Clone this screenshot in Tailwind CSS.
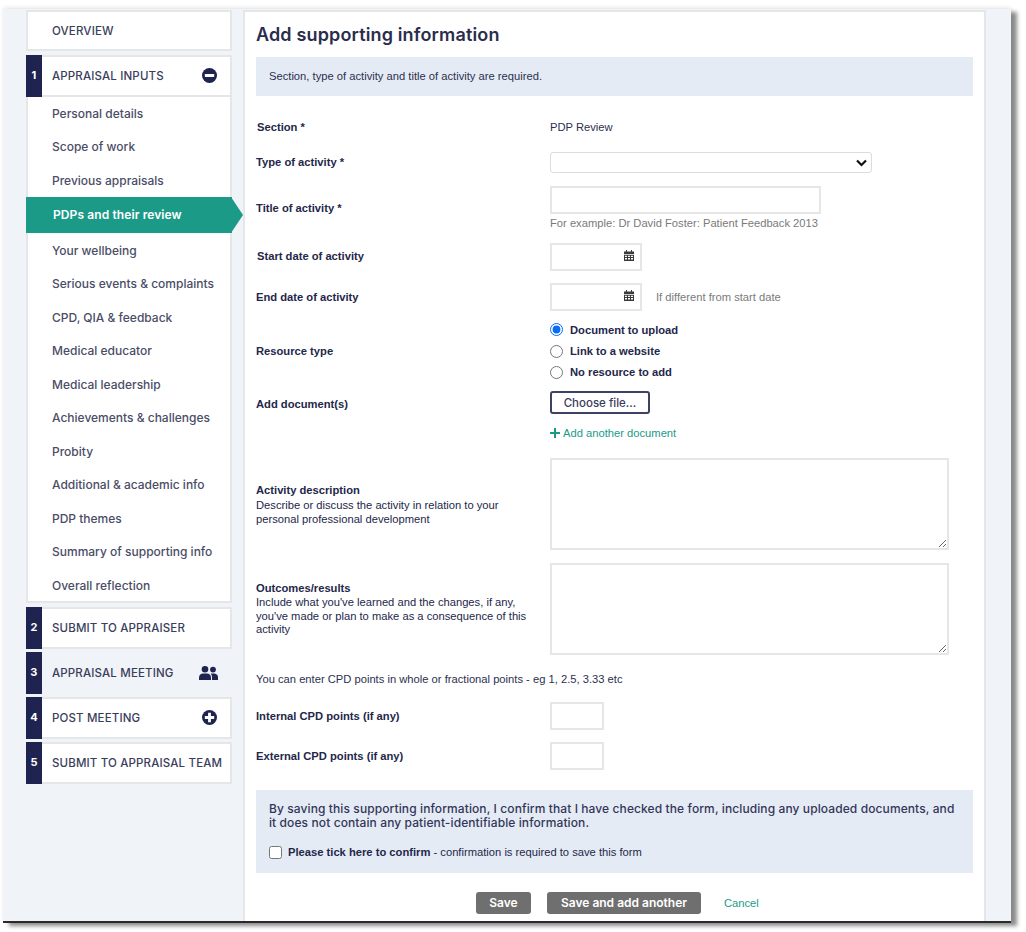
<!DOCTYPE html>
<html lang="en">
<head>
<meta charset="utf-8">
<title>Add supporting information</title>
<script src="https://cdn.jsdelivr.net/npm/@tailwindcss/browser@4"></script>
</head>
<body class="bg-white w-[1026px] h-[932px] overflow-hidden font-['Liberation_Sans',sans-serif] text-[#1f2450]">
<div class="ml-[3px] mt-[9px] w-[1008px] h-[914px] flex items-stretch bg-[#f0f4f8] border-b-2 border-[#2a2a2a] shadow-[6px_3px_4px_rgba(0,0,0,0.45),0_-2px_4px_rgba(0,0,0,0.08)] overflow-hidden">
  <aside class="w-[240px] shrink-0 pl-[23px] pt-[1px] font-['Inter',sans-serif] font-medium text-[#3a3d5c]">
    <div class="w-[206px] h-[41px] pt-[2px] bg-white border-2 border-[#e4e6e8] flex items-center pl-[24px] text-[11.5px] tracking-[0.15px]">OVERVIEW</div>

    <div class="w-[206px] h-[42px] mt-[4px] pt-[2px] bg-white border-2 border-[#e4e6e8] flex items-center relative pl-[24px] text-[11.5px] tracking-[0.15px]">
      <span class="absolute left-[-2px] top-[-2px] w-[16px] h-[42px] pb-[2px] bg-[#1e2350] text-white text-[11px] font-bold flex items-center justify-center">1</span>
      APPRAISAL INPUTS
      <svg class="absolute left-[174px] top-[11px] w-[15px] h-[15px]" viewBox="0 0 16 16"><circle cx="8" cy="8" r="8" fill="#1e2350"/><rect x="3" y="6.5" width="10" height="3" rx="0.5" fill="#fff"/></svg>
    </div>

    <div class="w-[206px] h-[506px] bg-white border-x-2 border-b-2 border-[#e4e6e8] text-[12px] text-[#4a4d66]">
      <div class="h-[33px] flex items-center pl-[24px]">Personal details</div>
      <div class="h-[33.5px] flex items-center pl-[24px]">Scope of work</div>
      <div class="h-[33.5px] pt-[1px] flex items-center pl-[24px]">Previous appraisals</div>
      <div class="h-[36px] -mx-[2px] flex items-center pl-[27px] bg-[#1b9a88] text-white font-semibold tracking-[0.1px] relative">PDPs and their review
        <span class="absolute right-[-11px] top-0 w-[12px] h-[36px] bg-[#1b9a88] [clip-path:polygon(0_0,100%_50%,0_100%)]"></span>
      </div>
      <div class="h-[33.5px] pt-[2px] flex items-center pl-[24px]">Your wellbeing</div>
      <div class="h-[33.5px] pt-[2px] flex items-center pl-[24px]">Serious events &amp; complaints</div>
      <div class="h-[33.5px] pt-[2px] flex items-center pl-[24px]">CPD, QIA &amp; feedback</div>
      <div class="h-[33.5px] pt-[2px] flex items-center pl-[24px]">Medical educator</div>
      <div class="h-[33.5px] pt-[2px] flex items-center pl-[24px]">Medical leadership</div>
      <div class="h-[33.5px] pt-[2px] flex items-center pl-[24px]">Achievements &amp; challenges</div>
      <div class="h-[33.5px] pt-[2px] flex items-center pl-[24px]">Probity</div>
      <div class="h-[33.5px] pt-[2px] flex items-center pl-[24px]">Additional &amp; academic info</div>
      <div class="h-[33.5px] pt-[2px] flex items-center pl-[24px]">PDP themes</div>
      <div class="h-[33.5px] pt-[2px] flex items-center pl-[24px]">Summary of supporting info</div>
      <div class="h-[33.5px] pt-[2px] flex items-center pl-[24px]">Overall reflection</div>
    </div>

    <div class="w-[206px] h-[42px] mt-[4px] pt-[2px] bg-white border-2 border-[#e4e6e8] flex items-center relative pl-[24px] text-[11.5px] tracking-[0.15px]">
      <span class="absolute left-[-2px] top-[-2px] w-[16px] h-[42px] pb-[2px] bg-[#1e2350] text-white text-[11px] font-bold flex items-center justify-center">2</span>
      SUBMIT TO APPRAISER
    </div>
    <div class="w-[206px] h-[42px] mt-[3px] pt-[2px] flex items-center relative pl-[26px] text-[11.5px] tracking-[0.15px]">
      <span class="absolute left-0 top-0 w-[16px] h-[42px] pb-[2px] bg-[#1e2350] text-white text-[11px] font-bold flex items-center justify-center">3</span>
      APPRAISAL MEETING
      <svg class="absolute left-[173px] top-[14px] w-[19px] h-[14px]" viewBox="0 0 19 14" fill="#1e2350"><circle cx="6" cy="3.3" r="3.3"/><circle cx="14" cy="3.6" r="2.9"/><path d="M0 14v-2.6C0 9 2 7.6 4 7.6h4c2 0 4 1.4 4 3.8V14z"/><path d="M13 14v-3c0-1.300-.5-2.400-1.300-3.300.5-.1 1-.1 1.500-.1h1.800c2 0 4 1.300 4 3.500V14z"/></svg>
    </div>
    <div class="w-[206px] h-[42px] mt-[3px] pt-[2px] bg-white border-2 border-[#e4e6e8] flex items-center relative pl-[24px] text-[11.5px] tracking-[0.15px]">
      <span class="absolute left-[-2px] top-[-2px] w-[16px] h-[42px] pb-[2px] bg-[#1e2350] text-white text-[11px] font-bold flex items-center justify-center">4</span>
      POST MEETING
      <svg class="absolute left-[174px] top-[11px] w-[15px] h-[15px]" viewBox="0 0 16 16"><circle cx="8" cy="8" r="8" fill="#1e2350"/><path d="M6.500 3h3v3.500H13v3H9.500V13h-3V9.500H3v-3h3.500z" fill="#fff"/></svg>
    </div>
    <div class="w-[206px] h-[42px] mt-[3px] pt-[2px] bg-white border-2 border-[#e4e6e8] flex items-center relative pl-[24px] text-[11.5px] tracking-[0.15px] whitespace-nowrap">
      <span class="absolute left-[-2px] top-[-2px] w-[16px] h-[42px] pb-[2px] bg-[#1e2350] text-white text-[11px] font-bold flex items-center justify-center">5</span>
      SUBMIT TO APPRAISAL TEAM
    </div>
  </aside>

  <main class="w-[743px] mt-[1px] bg-white border-x-2 border-t-2 border-[#e4e6e8] pl-[11px] pr-[10px] text-[11.2px] leading-[14px]">
    <h1 class="h-[45px] pt-[12px] font-['Inter',sans-serif] text-[18px] leading-[22px] font-semibold tracking-[0.15px] text-[#2a2d4c]">Add supporting information</h1>
    <div class="w-[717px] h-[39px] pb-[2px] bg-[#e5ebf4] flex items-center pl-[13px] text-[#2c3050]">Section, type of activity and title of activity are required.</div>

    <div class="flex mt-[24px] h-[14px] items-center"><label class="w-[294px] pl-[1px] font-bold text-[#23274a]">Section *</label><span class="text-[#2c3050]">PDP Review</span></div>

    <div class="flex mt-[18px] items-center"><label class="w-[294px] pb-[2px] font-bold text-[#23274a]">Type of activity *</label>
      <div class="w-[322px] h-[21px] bg-white border border-[#dcdcdc] rounded-[3px] flex items-center justify-end pr-[3px]">
        <svg class="w-[13px] h-[13px]" viewBox="0 0 13 13" fill="none" stroke="#111" stroke-width="2.200"><path d="M2 4.500 6.500 9 11 4.500"/></svg>
      </div>
    </div>

    <div class="flex mt-[13px] relative"><label class="w-[294px] h-[28px] flex items-center pt-[16px] font-bold text-[#23274a]">Title of activity *</label>
      <div>
        <div class="w-[271px] h-[28px] border-2 border-[#e6e6e6]"></div>
        <p class="mt-[2px] text-[#7a7a7a]">For example: Dr David Foster: Patient Feedback 2013</p>
      </div>
    </div>

    <div class="flex mt-[13px] items-center"><label class="w-[294px] pb-[2px] font-bold pl-[1px] text-[#23274a]">Start date of activity</label>
      <div class="w-[92px] h-[28px] border-2 border-[#e6e6e6] flex items-start justify-end pr-[6px] pt-[5px]">
        <svg class="w-[10px] h-[11px]" viewBox="0 0 10 11" fill="#3a3a3a"><path d="M2 0h1v1.500h4V0h1v1.500h2v2.500H0V1.500h2zM0 4.800h10V11H0zM1 5.800v1.200h2V5.800zM4 5.800v1.200h2V5.800zM7 5.800v1.200h2V5.800zM1 8v1.500h2V8zM4 8v1.500h2V8zM7 8v1.500h2V8z" fill-rule="evenodd"/></svg>
      </div>
    </div>

    <div class="flex mt-[12px] items-center"><label class="w-[294px] font-bold text-[#23274a]">End date of activity</label>
      <div class="w-[92px] h-[28px] border-2 border-[#e6e6e6] flex items-start justify-end pr-[6px] pt-[5px]">
        <svg class="w-[10px] h-[11px]" viewBox="0 0 10 11" fill="#3a3a3a"><path d="M2 0h1v1.500h4V0h1v1.500h2v2.500H0V1.500h2zM0 4.800h10V11H0zM1 5.800v1.200h2V5.800zM4 5.800v1.200h2V5.800zM7 5.800v1.200h2V5.800zM1 8v1.500h2V8zM4 8v1.500h2V8zM7 8v1.500h2V8z" fill-rule="evenodd"/></svg>
      </div>
      <span class="ml-[14px] text-[#7a7a7a]">If different from start date</span>
    </div>

    <div class="flex mt-[12px] items-center"><label class="w-[294px] font-bold text-[#23274a]">Resource type</label>
      <div class="flex flex-col gap-[7px] font-bold text-[#23274a]">
        <div class="flex items-start h-[14px]"><input type="radio" name="r" checked class="w-[13px] h-[13px] mr-[7px] m-0 accent-[#0a6cf5]"><span>Document to upload</span></div>
        <div class="flex items-start h-[14px]"><input type="radio" name="r" class="w-[13px] h-[13px] mr-[7px] mt-[1px]"><span>Link to a website</span></div>
        <div class="flex items-start h-[14px]"><input type="radio" name="r" class="w-[13px] h-[13px] mr-[7px] mt-[1px]"><span>No resource to add</span></div>
      </div>
    </div>

    <div class="flex mt-[12px] items-center"><label class="w-[294px] pt-[2px] font-bold text-[#23274a]">Add document(s)</label>
      <button class="w-[100px] h-[23px] border-2 border-[#3d4163] rounded-[3px] bg-white font-['Inter',sans-serif] text-[11.5px] font-medium text-[#3a3d5c]">Choose file...</button>
    </div>

    <div class="flex mt-[12px] h-[14px] items-center"><span class="w-[294px]"></span>
      <svg class="w-[10px] h-[10px] mr-[3px]" viewBox="0 0 10 10" fill="#1b9a88"><path d="M4 0h2v4h4v2H6v4H4V6H0V4h4z"/></svg>
      <a class="text-[#1b9a88]">Add another document</a>
    </div>

    <div class="flex mt-[18px] items-center"><div class="w-[294px] pr-[30px] pt-[1px] text-[#23274a]"><b class="block mb-[2px]">Activity description</b><span class="leading-[13.5px] block">Describe or discuss the activity in relation to your personal professional development</span></div>
      <textarea class="w-[399px] h-[92px] border-2 border-[#e6e6e6] block"></textarea>
    </div>

    <div class="flex mt-[13px] items-center"><div class="w-[294px] pr-[20px] text-[#23274a]"><b class="block mb-[1px]">Outcomes/results</b><span class="leading-[13.5px] block">Include what you've learned and the changes, if any, you've made or plan to make as a consequence of this activity</span></div>
      <textarea class="w-[399px] h-[92px] border-2 border-[#e6e6e6] block"></textarea>
    </div>

    <p class="mt-[17px] text-[#2c3050]">You can enter CPD points in whole or fractional points - eg 1, 2.5, 3.33 etc</p>

    <div class="flex mt-[16px] items-center"><label class="w-[294px] font-bold text-[#23274a]">Internal CPD points (if any)</label><div class="w-[54px] h-[28px] border-2 border-[#e6e6e6]"></div></div>
    <div class="flex mt-[12px] items-center"><label class="w-[294px] font-bold text-[#23274a]">External CPD points (if any)</label><div class="w-[54px] h-[28px] border-2 border-[#e6e6e6]"></div></div>

    <div class="w-[717px] h-[83px] mt-[20px] bg-[#e5ebf4] pl-[13px] pt-[12px]">
      <p class="font-['Inter',sans-serif] font-medium text-[12px] tracking-[0.1px] leading-[14px] text-[#33365a] whitespace-nowrap">By saving this supporting information, I confirm that I have checked the form, including any uploaded documents, and<br>it does not contain any patient-identifiable information.</p>
      <div class="flex items-start mt-[15px]"><input type="checkbox" class="w-[13px] h-[13px] mt-[1px] mr-[6px]"><span class="text-[#23274a]"><b>Please tick here to confirm</b> - confirmation is required to save this form</span></div>
    </div>

    <div class="flex items-center mt-[19px] ml-[220px] font-['Inter',sans-serif] text-[12px] font-semibold">
      <button class="w-[55px] h-[22px] rounded-[3px] bg-[#6f6f6f] text-white">Save</button>
      <button class="w-[154px] h-[22px] ml-[16px] rounded-[3px] bg-[#6f6f6f] text-white">Save and add another</button>
      <a class="ml-[23px] font-['Liberation_Sans',sans-serif] font-normal text-[11.2px] text-[#1b9a88]">Cancel</a>
    </div>
  </main>
</div>
</body>
</html>
